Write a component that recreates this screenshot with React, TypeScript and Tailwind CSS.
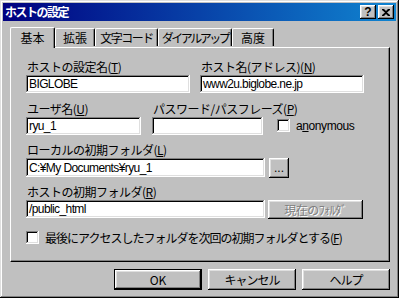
import React from 'react';

const raised =
  'shadow-[inset_-1px_-1px_#000,inset_1px_1px_#fff,inset_-2px_-2px_#808080,inset_2px_2px_#dfdfdf]';
const sunken =
  'shadow-[inset_-1px_-1px_#fff,inset_1px_1px_#808080,inset_-2px_-2px_#dfdfdf,inset_2px_2px_#000]';

function Field({ value, className }: { value?: string; className: string }) {
  return (
    <div
      className={`bg-white ${sunken} pl-[3px] flex items-center text-[12px] leading-none tracking-[-0.6px] font-['Liberation_Sans',sans-serif] ${className}`}
    >
      {value}
    </div>
  );
}

function Label({ children }: { children: React.ReactNode }) {
  return <div className="h-[15px] leading-[13px] text-[12px] tracking-[-0.5px] pl-px whitespace-nowrap">{children}</div>;
}

function Check({ label }: { label: React.ReactNode }) {
  return (
    <div className="flex items-center gap-[6px]">
      <div className={`w-[13px] h-[13px] bg-white ${sunken}`} />
      <span className="text-[12px] leading-[13px] whitespace-nowrap">{label}</span>
    </div>
  );
}

function Button({ children, className, disabled }: { children: React.ReactNode; className: string; disabled?: boolean }) {
  return (
    <div
      className={`${raised} bg-[#c0c0c0] flex items-center justify-center text-[12px] leading-none ${
        disabled ? 'text-[#808080] [text-shadow:1px_1px_#fff]' : 'text-black'
      } ${className}`}
    >
      {children}
    </div>
  );
}

const tabs = [
  { label: '基本', w: 'w-[45px]', t: '' },
  { label: '拡張', w: 'w-[40px]', t: '' },
  { label: '文字コード', w: 'w-[63px]', t: 'tracking-[-1.5px]' },
  { label: 'ダイアルアップ', w: 'w-[74px]', t: 'tracking-[-2.5px]' },
  { label: '高度', w: 'w-[42px]', t: '' },
];

export default function App() {
  return (
    <div className="w-[399px] h-[298px] bg-[#c0c0c0] p-[3px] flex flex-col shadow-[inset_-1px_-1px_#000,inset_1px_1px_#dfdfdf,inset_-2px_-2px_#808080,inset_2px_2px_#fff] font-['Noto_Sans_CJK_JP',sans-serif] text-black">
      {/* title */}
      <div className="h-[18px] bg-[linear-gradient(90deg,#000080,#1084d0)] flex items-center pl-[2px] pr-[2px]">
        <span className="text-white text-[12px] font-bold leading-none tracking-[-1.5px]">ホストの設定</span>
        <div className="ml-auto flex gap-[1px]">
          <Button className="w-[16px] h-[14px] font-bold text-[12px] font-['Liberation_Sans',sans-serif]">?</Button>
          <Button className="w-[16px] h-[14px] ml-[1px]">
            <svg width="8" height="7" viewBox="0 0 8 7">
              <path d="M0 0h2l2 2 2-2h2v1L5 3.5 8 6v1H6L4 5 2 7H0V6l3-2.5L0 1z" fill="#000" />
            </svg>
          </Button>
        </div>
      </div>

      <div className="flex-1 pl-[7px] pr-[6px] pt-[6px] flex flex-col">
        {/* tabs */}
        <div className="h-[20px] flex items-end relative z-10">
          {tabs.map((t, i) =>
            i === 0 ? (
              <div
                key={t.label}
                className={`${t.w} h-[21px] -mb-px bg-[#c0c0c0] border-l border-t border-white border-r border-r-[#000] rounded-t-[2px] shadow-[inset_-1px_0_#808080] flex justify-center items-start pt-[3px] text-[12px] leading-[13px] whitespace-nowrap`}
              >
                {t.label}
              </div>
            ) : (
              <div
                key={t.label}
                className={`${t.w} ${t.t} h-[18px] mb-px bg-[#c0c0c0] border-l border-t border-white border-r border-r-[#000] rounded-t-[2px] shadow-[inset_-1px_0_#808080] flex justify-center items-start pt-[2px] text-[12px] leading-[13px] whitespace-nowrap`}
              >
                {t.label}
              </div>
            )
          )}
        </div>

        {/* panel */}
        <div className="h-[215px] w-[380px] border-t border-l border-white border-r border-b border-r-black border-b-black shadow-[inset_-1px_-1px_#808080] pl-[15px] pt-[12px] flex flex-col">
          <div className="flex gap-[10px]">
            <div className="w-[164px]">
              <Label>
                ホストの設定名(<u>T</u>)
              </Label>
              <Field value="BIGLOBE" className="h-[18px]" />
            </div>
            <div className="w-[164px]">
              <Label>
                ホスト名(アドレス)(<u>N</u>)
              </Label>
              <Field value="www2u.biglobe.ne.jp" className="h-[18px]" />
            </div>
          </div>

          <div className="flex items-end mt-[9px]">
            <div className="w-[115px]">
              <Label>
                ユーザ名(<u>U</u>)
              </Label>
              <Field value="ryu_1" className="h-[18px]" />
            </div>
            <div className="w-[111px] ml-[11px]">
              <Label>
                パスワード/パスフレーズ(<u>P</u>)
              </Label>
              <Field className="h-[18px]" />
            </div>
            <div className="ml-[14px] mb-[2px]">
              <Check label={<span className="font-['Liberation_Sans',sans-serif] text-[12px] tracking-[-0.4px]">a<u>n</u>onymous</span>} />
            </div>
          </div>

          <div className="mt-[8px]">
            <Label>
              ローカルの初期フォルダ(<u>L</u>)
            </Label>
            <div className="flex gap-[4px] items-start">
              <Field value="C:¥My Documents¥ryu_1" className="h-[19px] w-[239px]" />
              <Button className="w-[20px] h-[20px] text-[9px] font-['Liberation_Sans',sans-serif]">...</Button>
            </div>
          </div>

          <div className="mt-[7px]">
            <Label>
              ホストの初期フォルダ(<u>R</u>)
            </Label>
            <div className="flex gap-[3px] items-start">
              <Field value="/public_html" className="h-[18px] w-[239px]" />
              <Button disabled className="w-[95px] h-[19px] tracking-[-0.5px]">
                現在のﾌｫﾙﾀﾞ
              </Button>
            </div>
          </div>

          <div className="mt-[12px]">
            <Check
              label={
                <span className="tracking-[-1px]">
                  最後にアクセスしたフォルダを次回の初期フォルダとする(<u>F</u>)
                </span>
              }
            />
          </div>
        </div>

        {/* buttons */}
        <div className="flex justify-end gap-[6px] mt-[7px]">
          <div className="border border-black">
            <Button className="w-[86px] h-[19px]">OK</Button>
          </div>
          <Button className="w-[88px] h-[21px] tracking-[-1px]">キャンセル</Button>
          <Button className="w-[88px] h-[21px] tracking-[-1px]">ヘルプ</Button>
        </div>
      </div>
    </div>
  );
}
